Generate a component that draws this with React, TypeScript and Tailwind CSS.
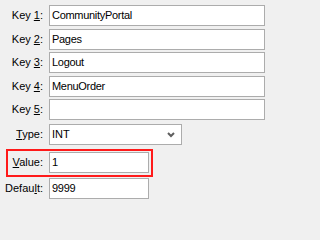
import React from 'react';

const font = { fontFamily: '"Liberation Sans", Arial, sans-serif' };

function Label({ pre, hot, post, width = 'w-[43px]' }: { pre: string; hot: string; post: string; width?: string }) {
  return (
    <div className={`${width} h-[21px] shrink-0 flex items-center justify-end text-[11px] text-black`}>
      <span className="whitespace-pre">
        {pre}
        <span className="underline underline-offset-[1px]">{hot}</span>
        {post}
      </span>
    </div>
  );
}

function TextBox({ value, width }: { value: string; width: string }) {
  return (
    <div
      className={`${width} h-[21px] shrink-0 border border-[#acacac] bg-white pl-[2px] flex items-center text-[11px] tracking-[-0.3px] text-black`}
    >
      {value}
    </div>
  );
}

const keys = [
  { n: '1', value: 'CommunityPortal' },
  { n: '2', value: 'Pages' },
  { n: '3', value: 'Logout' },
  { n: '4', value: 'MenuOrder' },
  { n: '5', value: '' },
];

export default function App() {
  return (
    <div className="min-h-screen w-full bg-[#f0f0f0] pt-[5px]" style={font}>
      <div className="flex flex-col gap-[2.5px]">
        {keys.map((k) => (
          <div key={k.n} className="flex items-center gap-[6px]">
            <Label pre="Key " hot={k.n} post=":" />
            <TextBox value={k.value} width="w-[216px]" />
          </div>
        ))}

        {/* Type dropdown */}
        <div className="flex items-center gap-[6px] mt-[1px]">
          <Label pre="" hot="T" post="ype:" />
          <div className="w-[133px] h-[21px] border border-[#acacac] bg-white pl-[2px] pr-[6px] flex items-center justify-between text-[11px] text-black">
            <span>INT</span>
            <svg width="8" height="6" viewBox="0 0 8 6" className="mt-[1px]">
              <path d="M1 1 L4 4 L7 1" fill="none" stroke="#5f5f5f" strokeWidth="2" />
            </svg>
          </div>
        </div>

        {/* Value, highlighted */}
        <div className="ml-[6px] mt-[1.5px] w-[147px] h-[28px] border-2 border-[#ff1a1a] flex items-start pt-[1px] gap-[6px]">
          <Label pre="" hot="V" post="alue:" width="w-[35px]" />
          <TextBox value="1" width="w-[100px]" />
        </div>

        <div className="flex items-center gap-[6px] -mt-[1.5px]">
          <Label pre="Defau" hot="l" post="t:" />
          <TextBox value="9999" width="w-[100px]" />
        </div>
      </div>
    </div>
  );
}
